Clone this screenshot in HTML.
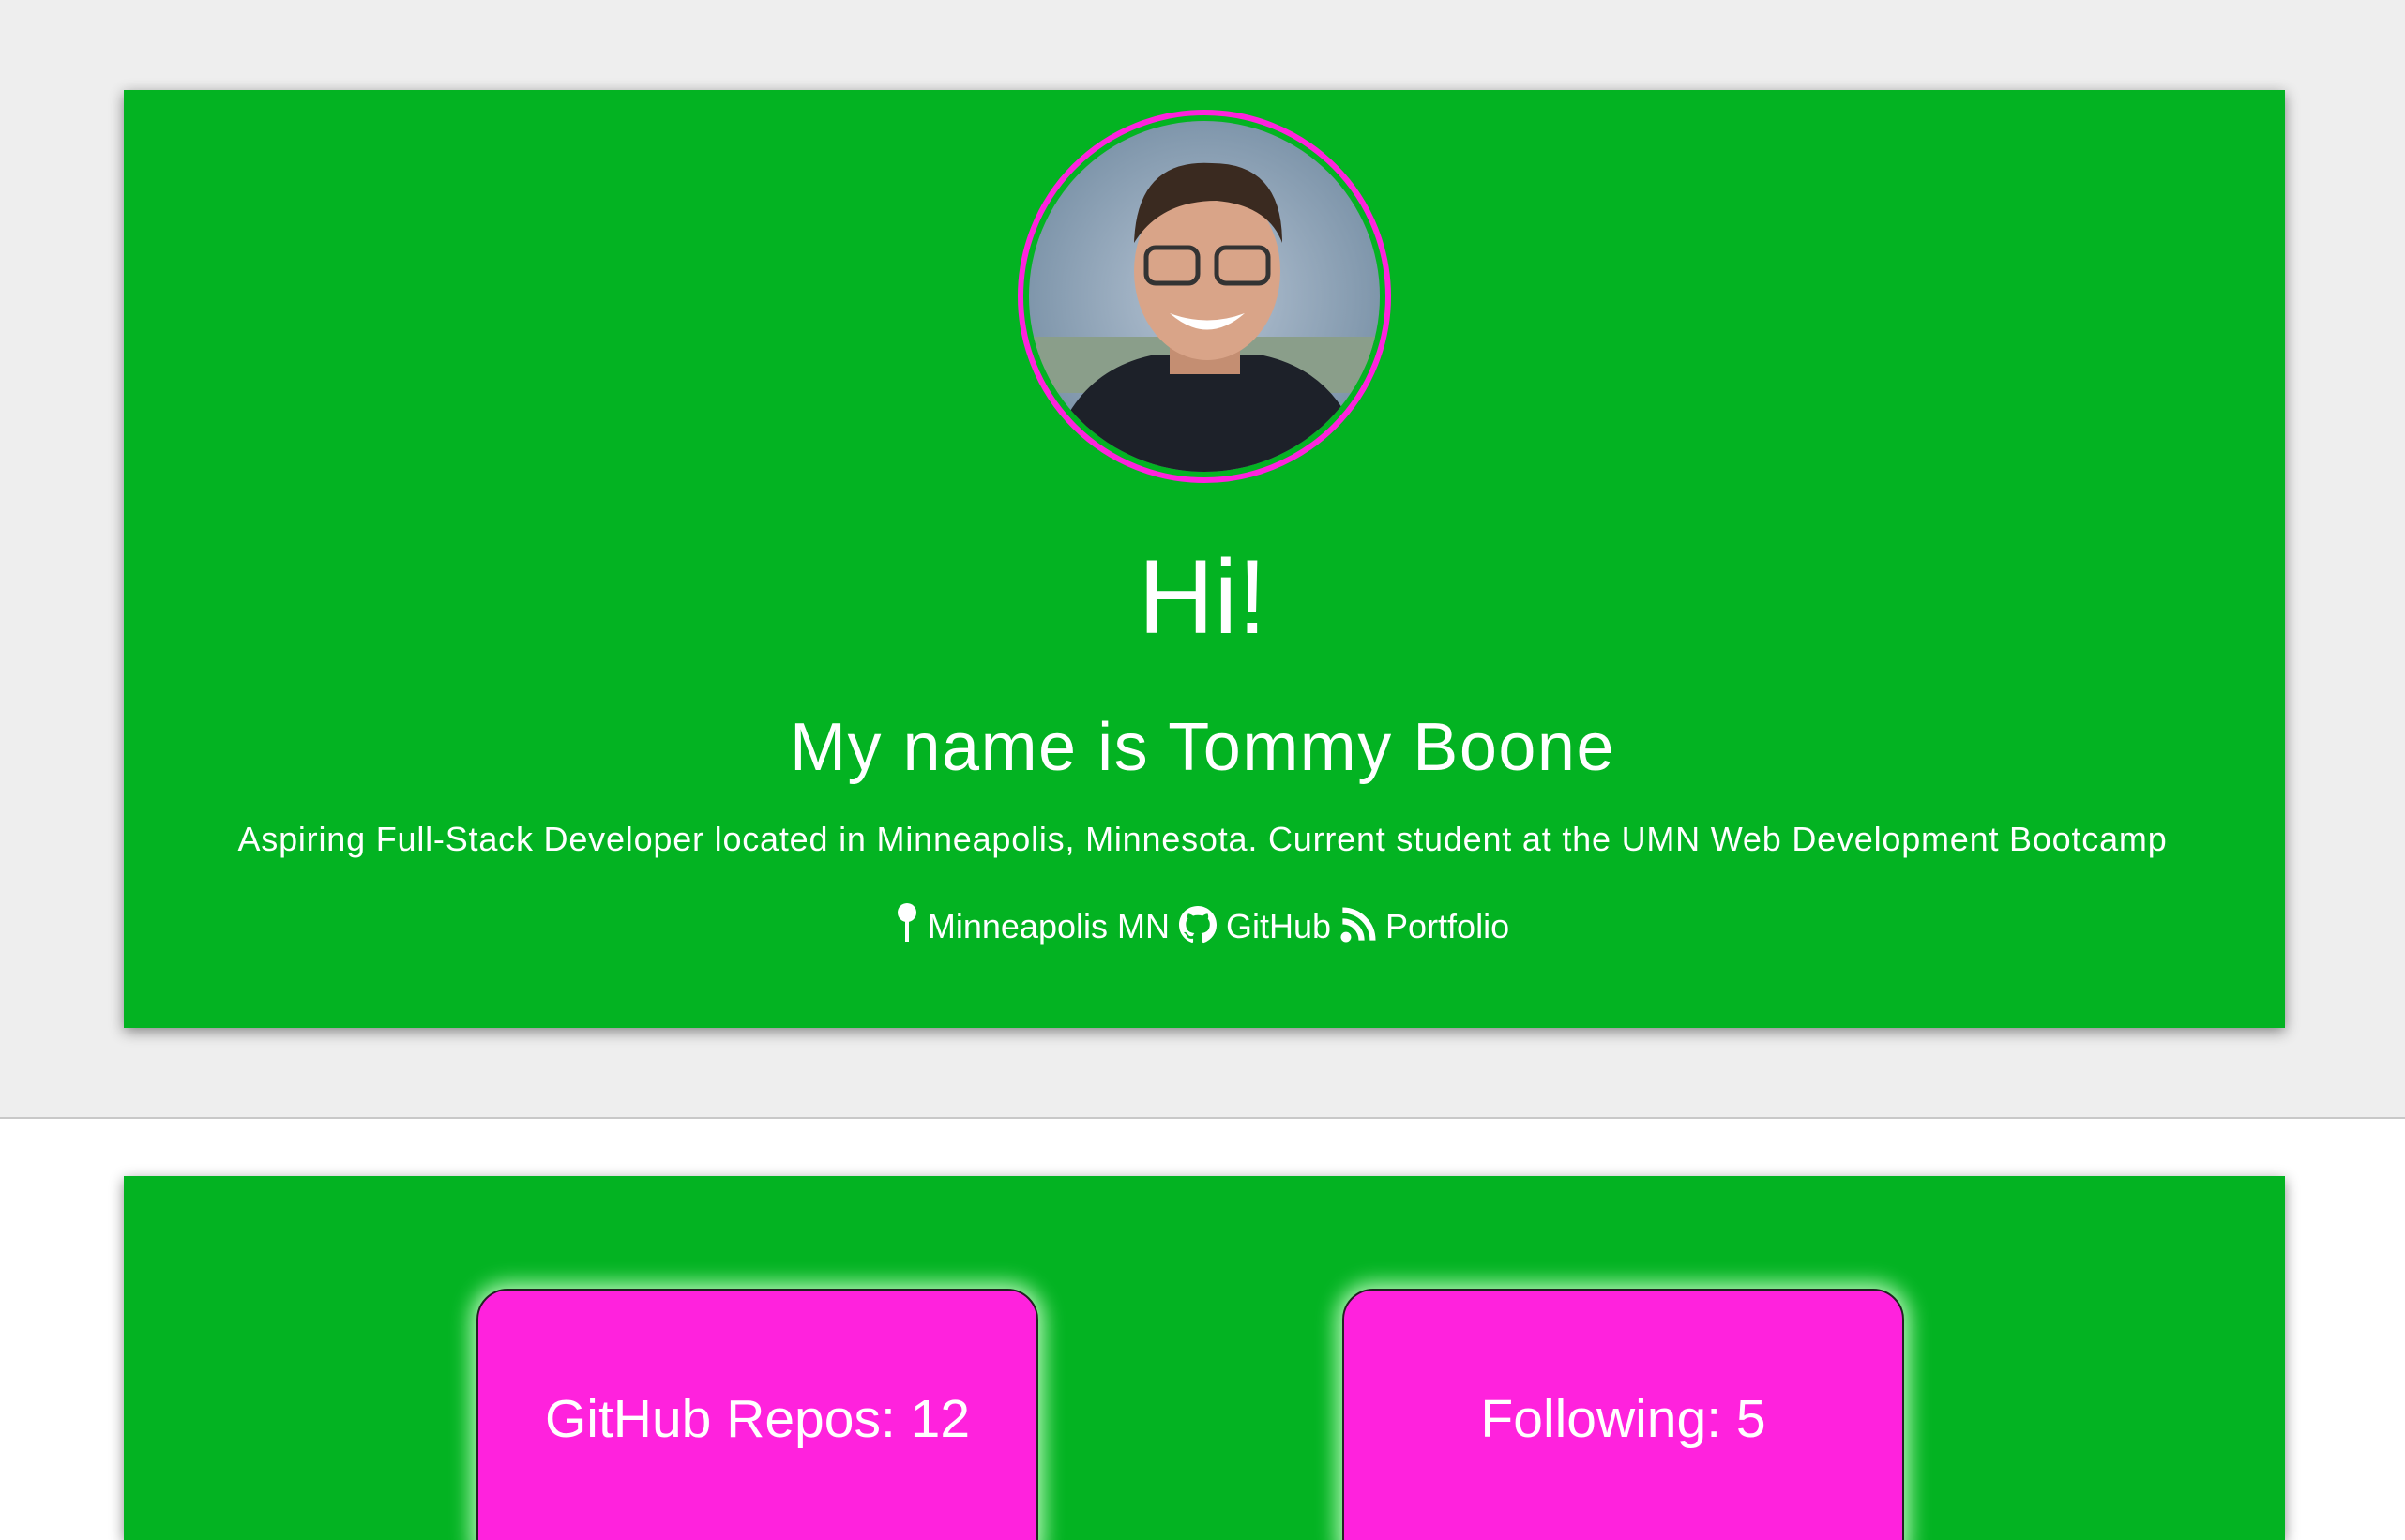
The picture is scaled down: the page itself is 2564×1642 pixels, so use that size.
<!DOCTYPE html>
<html style="overflow:hidden;width:2564px;height:1642px"><head><meta charset="utf-8"><style>
*{margin:0;padding:0;box-sizing:border-box}
body{width:2564px;height:1642px;overflow:hidden;background:#fff;font-family:"Liberation Sans",sans-serif;color:#fff;position:relative}
.top{position:absolute;left:0;top:0;width:2564px;height:1193px;background:#eeeeee;border-bottom:2px solid #c8c8c8}
.card{position:absolute;left:132px;width:2304px;background:#03b322;box-shadow:0 4px 14px rgba(0,0,0,.45)}
.c1{top:96px;height:1000px}
.c2{top:1254px;height:388px}
.av{position:absolute;left:1085px;top:117px;width:398px;height:398px;border-radius:50%;border:6px solid #ff22dd;overflow:hidden;background:#03b322}
.av svg{position:absolute;left:6px;top:6px}
.t{position:absolute;left:0;width:2564px;text-align:center;white-space:nowrap}
.box{position:absolute;top:1374px;width:599px;height:300px;background:#ff22dd;border:2px solid #222;border-radius:33px;box-shadow:0 0 22px 6px rgba(200,255,200,.9)}
.box span{position:absolute;left:0;right:0;top:104px;text-align:center;font-size:57px;font-weight:300}
</style></head><body>
<div class="top"></div>
<div class="card c1"></div>
<div class="av"><svg width="374" height="374" viewBox="0 0 374 374">
<defs><radialGradient id="g" cx="50%" cy="50%" r="50%"><stop offset="0" stop-color="#b6c4d4"/><stop offset="1" stop-color="#7f96ab"/></radialGradient><clipPath id="c"><circle cx="187" cy="187" r="187"/></clipPath></defs>
<g clip-path="url(#c)">
<rect width="374" height="374" fill="url(#g)"/>
<rect y="230" width="374" height="60" fill="#8a9e8a"/>
<path d="M20 374 Q40 270 130 250 L250 250 Q340 270 360 374Z" fill="#1d2129"/>
<rect x="150" y="200" width="75" height="70" fill="#c48e72"/>
<ellipse cx="190" cy="160" rx="78" ry="95" fill="#d9a488"/>
<path d="M112 130 Q115 40 195 45 Q270 45 270 130 Q255 90 200 85 Q140 85 112 130Z" fill="#3a2a20"/>
<rect x="125" y="135" width="55" height="38" rx="10" fill="none" stroke="#333" stroke-width="5"/>
<rect x="200" y="135" width="55" height="38" rx="10" fill="none" stroke="#333" stroke-width="5"/>
<path d="M150 205 Q190 240 230 205 Q190 220 150 205Z" fill="#fff"/>
</g></svg></div>
<div class="t" style="top:572px;font-size:112px;font-weight:300">Hi!</div>
<div class="t" style="top:756px;font-size:72px;letter-spacing:1.5px">My name is Tommy Boone</div>
<div class="t" style="top:874px;font-size:36px;letter-spacing:0.8px">Aspiring Full-Stack Developer located in Minneapolis, Minnesota. Current student at the UMN Web Development Bootcamp</div>
<div class="t" style="top:962px;font-size:36px">
<svg width="24" height="44" viewBox="0 0 24 44" style="vertical-align:-6px"><circle cx="12" cy="11" r="10" fill="#fff"/><rect x="10" y="18" width="4" height="24" fill="#fff"/></svg>
Minneapolis MN
<svg width="40" height="40" viewBox="0 0 16 16" style="vertical-align:-6px"><path fill="#fff" d="M8 0C3.58 0 0 3.58 0 8c0 3.540 2.290 6.530 5.470 7.590.4.07.55-.17.55-.38v-1.33c-2.230.48-2.700-1.070-2.700-1.070-.36-.92-.89-1.170-.89-1.170-.73-.5.06-.49.06-.49.8.06 1.230.83 1.230.83.72 1.230 1.880.87 2.330.67.07-.52.28-.87.51-1.070-1.780-.2-3.640-.89-3.640-3.950 0-.87.31-1.590.82-2.150-.08-.2-.36-1.020.08-2.120 0 0 .67-.21 2.200.82a7.600 7.600 0 014 0c1.530-1.040 2.200-.82 2.200-.82.44 1.100.16 1.920.08 2.120.51.56.82 1.270.82 2.150 0 3.070-1.870 3.750-3.650 3.950.29.25.54.73.54 1.480v2.200c0 .21.15.46.55.38A8 8 0 0016 8c0-4.420-3.580-8-8-8z"/></svg>
GitHub
<svg width="38" height="38" viewBox="0 0 16 16" style="vertical-align:-5px"><circle cx="2.5" cy="13.5" r="2.3" fill="#fff"/><path d="M1 6.5a8.5 8.5 0 018.5 8.5M1 1.5A13.5 13.5 0 0114.5 15" fill="none" stroke="#fff" stroke-width="2.6"/></svg>
Portfolio</div>
<div class="card c2"></div>
<div class="box" style="left:508px"><span>GitHub Repos: 12</span></div>
<div class="box" style="left:1431px"><span>Following: 5</span></div>
</body></html>
